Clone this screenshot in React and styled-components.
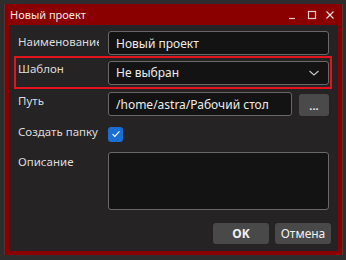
import React from 'react'
import styled, { createGlobalStyle } from 'styled-components'

const GlobalStyle = createGlobalStyle`
  html, body {
    margin: 0;
    padding: 0;
    background: #2e2d2d;
  }
  body {
    font-family: "Noto Sans", "DejaVu Sans", sans-serif;
  }
`

const Desktop = styled.div`
  width: 346px;
  height: 260px;
  padding: 4px 6px 5px 5px;
  box-sizing: border-box;
  display: flex;
`

const Window = styled.div`
  flex: 1;
  display: flex;
  flex-direction: column;
  background: #8a0000;
  padding: 0 4px 4px 4px;
  box-shadow: -1px 0 0 #5a3030, 1px 0 0 #4a3a3a;
`

const TitleBar = styled.div`
  height: 21px;
  display: flex;
  align-items: center;
  padding: 0 0 0 1px;
  color: #f2e6e6;
  font-size: 11px;
`

const Title = styled.span`
  flex: 1;
`

const TitleButtons = styled.div`
  display: flex;
  align-items: center;
  gap: 6px;
  padding-right: 2px;
`

const TitleIcon = styled.svg`
  width: 12px;
  height: 12px;
  display: block;
`

const Content = styled.div`
  flex: 1;
  background: #252323;
  display: flex;
  flex-direction: column;
  padding: 6px 6px 0 5px;
`

const Row = styled.div`
  display: flex;
  align-items: center;
  height: ${p => p.$h}px;
  margin-top: ${p => p.$mt || 0}px;
  padding: 0 1px 0 4px;
  box-sizing: border-box;
  border: 2px solid ${p => (p.$highlight ? '#e3141c' : 'transparent')};
`

const Label = styled.div`
  width: 90px;
  flex: none;
  align-self: flex-start;
  margin-top: ${p => p.$top || 0}px;
  margin-left: -2px;
`

const LabelText = styled.div`
  width: 81px;
  color: #dcdcdc;
  font-size: 11.5px;
  line-height: 16px;
  overflow: hidden;
  white-space: nowrap;
`

const Field = styled.div`
  flex: ${p => (p.$w ? 'none' : 1)};
  width: ${p => (p.$w ? `${p.$w}px` : 'auto')};
  height: ${p => p.$h || 24}px;
  box-sizing: border-box;
  background: #141313;
  border: 1px solid #6a6868;
  border-radius: 3px;
  color: #ececec;
  font-size: 12px;
  display: flex;
  align-items: center;
  padding: 0 8px 0 7px;
  white-space: nowrap;
  overflow: hidden;
`

const Value = styled.span`
  flex: 1;
`

const Chevron = styled.svg`
  width: 12px;
  height: 8px;
  display: block;
`

const SmallButton = styled.div`
  width: 30px;
  height: 22px;
  margin-left: 7px;
  background: #4b4a4a;
  border-radius: 3px;
  color: #e8e8e8;
  font-size: 11px;
  font-weight: bold;
  display: flex;
  align-items: center;
  justify-content: center;
  align-self: flex-start;
`

const Check = styled.div`
  width: 15px;
  height: 15px;
  box-sizing: border-box;
  border-radius: 3px;
  background: #1a6fd4;
  display: flex;
  align-items: center;
  justify-content: center;
`

const Footer = styled.div`
  display: flex;
  justify-content: flex-end;
  gap: 6px;
  margin-top: 13px;
  padding-right: 1px;
`

const Button = styled.div`
  width: 56px;
  height: 21px;
  background: #4a4949;
  border-radius: 3px;
  color: #f0f0f0;
  font-size: 12px;
  font-weight: ${p => (p.$bold ? 'bold' : 'normal')};
  display: flex;
  align-items: center;
  justify-content: center;
`

export default function App() {
  return (
    <>
      <GlobalStyle />
      <Desktop>
        <Window>
          <TitleBar>
            <Title>Новый проект</Title>
            <TitleButtons>
              <TitleIcon viewBox="0 0 12 12">
                <path d="M1 9.5h6" stroke="#e8caca" strokeWidth="1.2" />
              </TitleIcon>
              <TitleIcon viewBox="0 0 12 12">
                <rect x="2.5" y="2.5" width="7" height="7" fill="none" stroke="#e8caca" strokeWidth="1.2" />
              </TitleIcon>
              <TitleIcon viewBox="0 0 12 12">
                <path d="M2.5 2.5l7 7M9.5 2.5l-7 7" stroke="#f0dede" strokeWidth="1.2" />
              </TitleIcon>
            </TitleButtons>
          </TitleBar>
          <Content>
            <Row $h={24}>
              <Label $top={1}><LabelText>Наименование</LabelText></Label>
              <Field>
                <Value>Новый проект</Value>
              </Field>
            </Row>
            <Row $h={33} $mt={1} $highlight>
              <Label $top={3}><LabelText>Шаблон</LabelText></Label>
              <Field>
                <Value>Не выбран</Value>
                <Chevron viewBox="0 0 12 8">
                  <path d="M1.5 2l4.5 4 4.5-4" fill="none" stroke="#c8c8c8" strokeWidth="1.1" />
                </Chevron>
              </Field>
            </Row>
            <Row $h={24} $mt={3}>
              <Label $top={-1}><LabelText>Путь</LabelText></Label>
              <Field $w={184}>
                <Value>/home/astra/Рабочий стол</Value>
              </Field>
              <SmallButton>...</SmallButton>
            </Row>
            <Row $h={16} $mt={10}>
              <Label $top={-4}><LabelText>Создать папку</LabelText></Label>
              <Check>
                <svg width="10" height="8" viewBox="0 0 10 8">
                  <path d="M1.5 4.2l2.3 2.2 4.7-5" fill="none" stroke="#ffffff" strokeWidth="1.1" />
                </svg>
              </Check>
            </Row>
            <Row $h={58} $mt={10}>
              <Label $top={0}><LabelText>Описание</LabelText></Label>
              <Field $h={58} />
            </Row>
            <Footer>
              <Button $bold>OK</Button>
              <Button>Отмена</Button>
            </Footer>
          </Content>
        </Window>
      </Desktop>
    </>
  )
}
